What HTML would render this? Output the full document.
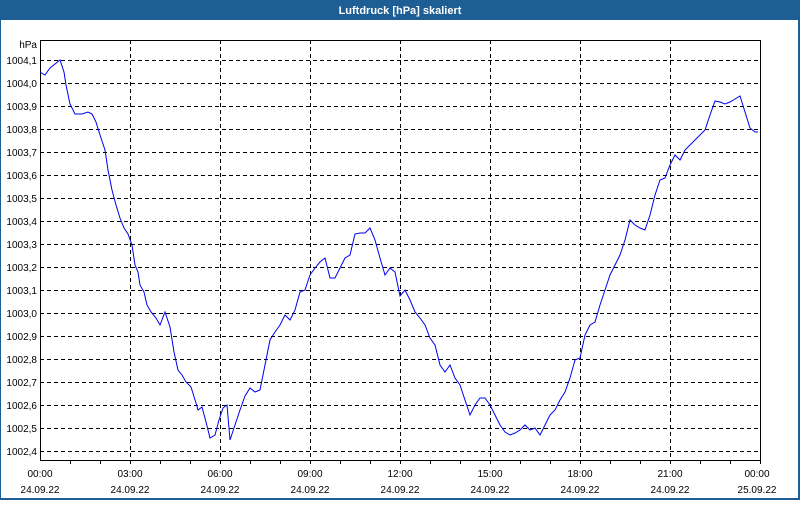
<!DOCTYPE html>
<html><head><style>
body{margin:0;width:800px;height:500px;overflow:hidden;background:#fff;font-family:"Liberation Sans",sans-serif}
</style></head><body>
<svg width="800" height="500" xmlns="http://www.w3.org/2000/svg" font-family="Liberation Sans, sans-serif">
<rect x="0" y="0" width="800" height="500" fill="#1d5e94"/>
<rect x="1" y="20" width="797" height="478" fill="#fff"/>
<text x="400" y="14" fill="#fff" font-size="11" font-weight="bold" text-anchor="middle">Luftdruck [hPa] skaliert</text>
<g stroke="#000" stroke-width="1" stroke-dasharray="4,3" fill="none">
<path d="M40 60.5H760M40 83.5H760M40 106.5H760M40 129.5H760M40 152.5H760M40 175.5H760M40 198.5H760M40 221.5H760M40 244.5H760M40 267.5H760M40 290.5H760M40 313.5H760M40 336.5H760M40 359.5H760M40 382.5H760M40 405.5H760M40 428.5H760M40 451.5H760"/>
<path d="M130.5 40V460M220.5 40V460M310.5 40V460M400.5 40V460M490.5 40V460M580.5 40V460M670.5 40V460"/>
</g>
<path d="M40.5 40.5H760.5V460.5H40.5Z" stroke="#000" fill="none"/>
<g stroke="#000"><path d="M70.5 460V464M100.5 460V464M130.5 460V464M160.5 460V464M190.5 460V464M220.5 460V464M250.5 460V464M280.5 460V464M310.5 460V464M340.5 460V464M370.5 460V464M400.5 460V464M430.5 460V464M460.5 460V464M490.5 460V464M520.5 460V464M550.5 460V464M580.5 460V464M610.5 460V464M640.5 460V464M670.5 460V464M700.5 460V464M730.5 460V464M760.5 460V464"/></g>
<polyline fill="none" stroke="#0000ee" stroke-width="1" points="40,72 45,75 50,68 55,64 60,60 64,72 66,85 70,104 75,114 82,114 88,112 92,114 96,122 100,135 105,150 108,170 112,190 116,205 120,218 124,228 128,234 132,245 135,265 138,272 140,285 144,292 147,305 151,312 156,318 160,325 165,312 170,327 174,352 178,370 182,375 186,382 191,387 196,403 198,410 202,407 206,422 210,438 215,435 219,420 223,408 227,405 230,440 235,425 240,410 245,396 250,388 255,392 260,390 265,365 270,340 275,332 280,325 285,315 290,320 295,310 300,292 305,290 310,275 315,268 320,262 325,258 330,278 335,278 340,268 345,258 350,255 355,234 360,233 365,233 370,228 375,240 380,258 385,275 390,268 395,272 400,296 405,290 410,300 415,312 420,318 425,325 430,338 435,345 440,365 445,372 450,365 455,378 460,385 465,400 470,415 475,405 480,398 485,398 490,405 495,415 500,425 505,432 510,435 515,433 520,430 525,425 530,430 535,428 540,435 545,425 550,415 555,410 560,400 565,392 570,378 575,360 580,358 585,335 590,325 595,322 600,305 605,290 610,275 615,265 620,255 625,240 630,220 635,225 640,228 645,230 650,215 655,195 660,180 665,178 670,165 675,155 680,160 685,150 690,145 695,140 700,135 705,130 710,115 715,101 720,102 725,104 730,102 735,99 740,96 745,112 750,128 755,132 758,132"/>
<g font-size="10" fill="#000" text-anchor="end">
<text x="37" y="48">hPa</text>
<text x="37" y="64">1004,1</text><text x="37" y="87">1004,0</text><text x="37" y="110">1003,9</text><text x="37" y="133">1003,8</text><text x="37" y="156">1003,7</text><text x="37" y="179">1003,6</text><text x="37" y="202">1003,5</text><text x="37" y="225">1003,4</text><text x="37" y="248">1003,3</text><text x="37" y="271">1003,2</text><text x="37" y="294">1003,1</text><text x="37" y="317">1003,0</text><text x="37" y="340">1002,9</text><text x="37" y="363">1002,8</text><text x="37" y="386">1002,7</text><text x="37" y="409">1002,6</text><text x="37" y="432">1002,5</text><text x="37" y="455">1002,4</text>
</g>
<g font-size="10" fill="#000" text-anchor="middle">
<text x="40" y="477">00:00</text><text x="40" y="493">24.09.22</text>
<text x="130" y="477">03:00</text><text x="130" y="493">24.09.22</text>
<text x="220" y="477">06:00</text><text x="220" y="493">24.09.22</text>
<text x="310" y="477">09:00</text><text x="310" y="493">24.09.22</text>
<text x="400" y="477">12:00</text><text x="400" y="493">24.09.22</text>
<text x="490" y="477">15:00</text><text x="490" y="493">24.09.22</text>
<text x="580" y="477">18:00</text><text x="580" y="493">24.09.22</text>
<text x="670" y="477">21:00</text><text x="670" y="493">24.09.22</text>
<text x="757" y="477">00:00</text><text x="757" y="493">25.09.22</text>
</g>
</svg>
</body></html>
